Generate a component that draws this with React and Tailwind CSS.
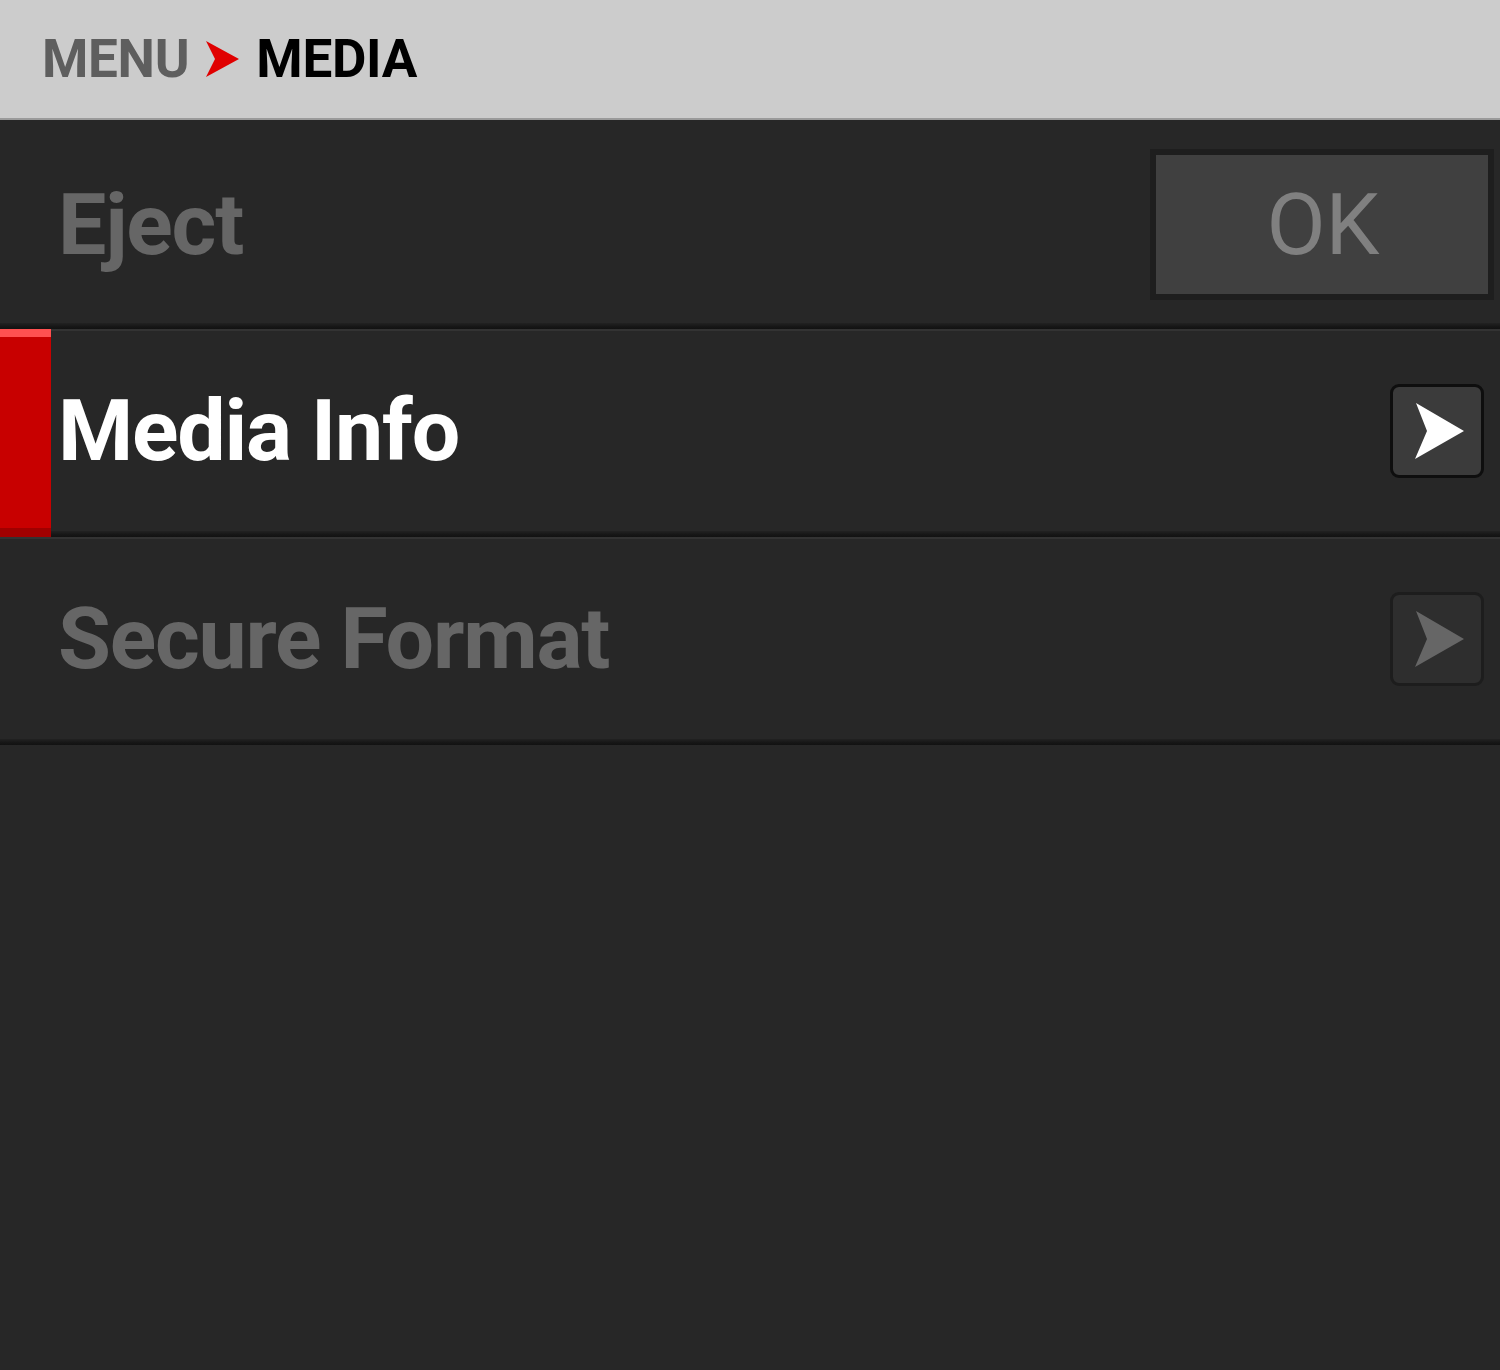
import React from "react";

function Chevron({ className, fill }) {
  return (
    <svg className={className} viewBox="0 0 49 56" fill={fill}>
      <path d="M1 0 L49 28 L0 56 L12 28 Z" />
    </svg>
  );
}

function RedArrow() {
  return (
    <svg className="w-[33px] h-[36px]" viewBox="0 0 33 36" fill="#e00000">
      <path d="M0 0 L33 18 L0 36 L9 18 Z" />
    </svg>
  );
}

function BottomShadow() {
  return <div className="h-[6px] bg-[linear-gradient(to_bottom,#222222,#161616_60%,#121212)]" />;
}

function Row({ label, active, disabled, right }) {
  return (
    <div className="relative h-[208px] flex flex-col">
      <div className="h-[2px] bg-[#333333]" />
      <div className="flex-1 flex items-center justify-between pl-[58px]">
        <span
          className={
            "text-[86px] font-bold tracking-[-1.2px] leading-none " +
            (disabled ? "text-[#666666]" : "text-white")
          }
        >
          {label}
        </span>
        {right}
      </div>
      <BottomShadow />
      {active && (
        <div className="absolute left-0 top-0 bottom-0 w-[51px] bg-[linear-gradient(to_bottom,#ff5050_0px,#ff5050_8px,#c80000_8px,#c80000_199px,#a00000_199px)]" />
      )}
    </div>
  );
}

function ArrowButton({ enabled }) {
  return (
    <div
      className={
        "w-[94px] h-[94px] mr-[16px] rounded-[9px] flex items-center justify-center " +
        (enabled
          ? "bg-[#3b3b3b] border-[3px] border-[#0e0e0e]"
          : "bg-[#2e2e2e] border-[3px] border-[#1d1d1d]")
      }
    >
      <Chevron className="w-[49px] h-[56px] ml-[4px]" fill={enabled ? "#ffffff" : "#666666"} />
    </div>
  );
}

export default function App() {
  return (
    <div
      className="w-[1500px] h-[1370px] bg-[#272727] flex flex-col overflow-hidden"
      style={{ fontFamily: "Roboto, 'Liberation Sans', sans-serif" }}
    >
      <div className="h-[118px] bg-[#cccccc] flex items-center pl-[42px] gap-[17px]">
        <span className="text-[53px] font-bold text-[#5e5e5e] leading-none tracking-[-0.3px]">MENU</span>
        <RedArrow />
        <span className="text-[53px] font-bold text-black leading-none tracking-[-0.3px]">MEDIA</span>
      </div>
      <div className="h-[2px] bg-[#9a9a9a]" />
      <div className="h-[209px] flex flex-col">
        <div className="flex-1 flex items-center justify-between pt-[6px]">
          <span className="pl-[58px] text-[86px] font-bold tracking-[-1.2px] leading-none text-[#666666]">Eject</span>
          <div className="w-[344px] h-[151px] mr-[6px] bg-[#1e1e1e] p-[6px]">
            <div className="w-full h-full bg-[#404040] flex items-center justify-center">
              <span className="text-[86px] font-normal leading-none text-[#808080] ml-[2px]">OK</span>
            </div>
          </div>
        </div>
        <BottomShadow />
      </div>
      <Row label="Media Info" active right={<ArrowButton enabled />} />
      <Row label="Secure Format" disabled right={<ArrowButton enabled={false} />} />
    </div>
  );
}
